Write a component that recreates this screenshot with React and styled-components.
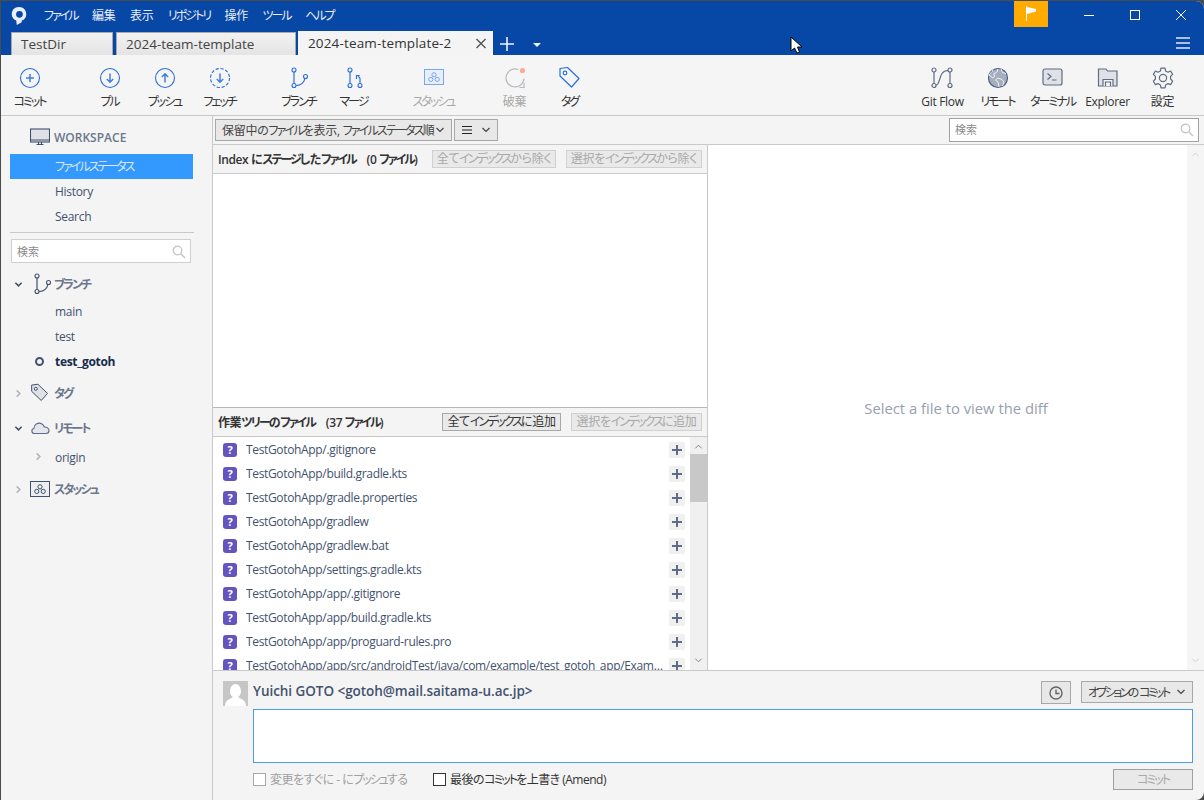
import React from 'react';
import styled, { createGlobalStyle } from 'styled-components';

const Global = createGlobalStyle`
  html, body { margin: 0; padding: 0; height: 100%; background: #4b4b4b; overflow: hidden; }
  body { font-family: "Open Sans", "Noto Sans CJK JP", sans-serif; font-size: 12px; font-feature-settings: "palt"; color: #42526e; letter-spacing: -0.3px; }
  #root { width: 1204px; height: 800px; }
  * { box-sizing: border-box; }
`;

const Kana = styled.span`letter-spacing: var(--kana, -2px);`;
const jp = (s) => s.split(/([ァ-ヶー]+)/).map((part, i) => (i % 2 ? <Kana key={i}>{part}</Kana> : part));

const Win = styled.div`
  position: relative; width: 1203px; height: 799px; margin: 1px 0 0 1px; background: #f4f4f4;
  border-radius: 0 8px 8px 0; overflow: hidden; display: flex; flex-direction: column;
`;
const Blue = styled.header`background: #0747a6; height: 54px; flex: none; display: flex; flex-direction: column;`;
const TitleRow = styled.div`height: 30px; display: flex; align-items: flex-start;`;
const Logo = styled.div`width: 43px; height: 30px; padding: 5px 0 0 9px; flex: none;`;
const Menu = styled.nav`display: flex; gap: 14.5px; padding-top: 7px; color: #e8eef8; line-height: 16px;`;
const Spacer = styled.div`flex: 1;`;
const Flag = styled.div`width: 34px; height: 26px; background: #ffab00; display: flex; justify-content: center; padding-top: 5px; margin-right: 18px;`;
const WinBtn = styled.div`width: 46px; height: 30px; display: flex; align-items: center; justify-content: center; padding-bottom: 2px;`;
const TabRow = styled.div`height: 24px; display: flex; align-items: flex-end; padding-left: 10px; color: #333;`;
const Tab = styled.div`
  width: ${p => p.$w}px; height: 23px; margin-right: ${p => p.$mr}px; padding-left: ${p => p.$pl}px; line-height: 22px; font-size: 13.5px; letter-spacing: 0;
  background: linear-gradient(#f2f2f2, #e4e4e4); border: 1px solid #a9a9a9; border-bottom: 0; color: #444;
`;
const ActiveTab = styled.div`
  width: 195px; height: 24px; background: #f4f4f4; padding-left: 10px; line-height: 24px; font-size: 13.5px; letter-spacing: 0.15px; color: #333;
  display: flex; justify-content: space-between; align-items: center;
`;
const TabActions = styled.div`display: flex; align-items: center; flex: 1; height: 24px;`;

const Toolbar = styled.div`height: 61px; flex: none; display: flex; padding-left: 1px; border-bottom: 1px solid #c9c9c9; background: #f5f5f5;`;
const TBtn = styled.div`
  width: 55px; margin-left: ${p => p.$ml || 0}px; margin-right: ${p => p.$mr || 0}px; display: flex; flex-direction: column; align-items: center; padding-top: 11px; flex: none;
  color: ${p => p.$off ? '#a8a8a8' : '#333'}; font-size: 12px; line-height: 16px; white-space: nowrap;
`;
const TIcon = styled.div`height: 24px; margin-bottom: 4px; padding-top: ${p => p.$pt || 0}px;`;
const TLabel = styled.span`display: block;`;

const Main = styled.div`flex: 1; display: flex; min-height: 0;`;
const Side = styled.aside`width: 212px; flex: none; border-right: 1px solid #c9c9c9; padding-top: 8px; display: flex; flex-direction: column;`;
const Head = styled.div`display: flex; align-items: center; height: ${p => p.$h || 28}px; margin-top: ${p => p.$mt || 0}px; margin-bottom: ${p => p.$mb || 0}px; color: #6b778c; font-weight: 600; font-size: 12px; letter-spacing: 0;`;
const Caret = styled.div`width: 29px; padding-left: 13px; flex: none; display: flex;`;
const HeadIcon = styled.div`width: 24px; flex: none; display: flex;`;
const SideItem = styled.div`
  height: 25px; line-height: 25px; padding-left: 45px; margin: ${p => p.$mt || 0}px 19px 0 9px; color: ${p => p.$sel ? '#dde7f5' : p.$cur ? '#172b4d' : '#42526e'}; background: ${p => p.$sel ? '#3399ff' : 'none'};
  font-weight: ${p => p.$cur ? 700 : 400}; position: relative;
`;
const Dot = styled.span`position: absolute; left: 25px; top: 8px; width: 9px; height: 9px; border: 2px solid #42526e; border-radius: 50%;`;
const Tri = styled.span`position: absolute; left: 24px; top: 7px; display: flex;`;
const Divider = styled.div`height: 1px; background: #c9c9c9; margin: 3px 18px 6px 9px;`;
const SearchBox = styled.div`
  width: ${p => p.$w}px; height: 24px; background: #fff; border: 1px solid ${p => p.$dark ? '#a2a2a2' : '#cfcfcf'}; color: #8a8a8a; font-size: 11px; line-height: 22px; padding: 1px 4px 0 5px;
  display: flex; justify-content: space-between; align-items: center; margin-left: ${p => p.$ml || 0}px; flex: none; letter-spacing: 0;
`;

const Work = styled.div`flex: 1; display: flex; flex-direction: column; min-width: 0;`;
const FilterBar = styled.div`height: 29px; flex: none; display: flex; align-items: center; padding: 0 5px 1px 2px; border-bottom: 1px solid #c9c9c9; gap: 2px;`;
const Select = styled.div`
  height: 22px; width: ${p => p.$w}px; background: #e8e8e8; border: 1px solid #a8a8a8; padding: 0 6px 0 6px; display: flex; align-items: center; justify-content: space-between;
  color: #444; font-size: 12px; font-weight: 400; letter-spacing: -0.3px; flex: none; white-space: nowrap; margin-left: ${p => p.$ml || 0}px; --kana: ${p => p.$kana || -2}px;
`;
const Panes = styled.div`flex: 1; display: flex; min-height: 0;`;
const Left = styled.div`width: 495px; flex: none; display: flex; flex-direction: column; border-right: 1px solid #c9c9c9;`;
const PaneHead = styled.div`
  height: ${p => p.$h}px; flex: none; display: flex; align-items: center; padding: 0 5px 0 5px; gap: 10px; border-bottom: 1px solid #c9c9c9; border-top: ${p => p.$top ? '1px solid #b8b8b8' : 'none'};
  color: #333; font-weight: 600; font-size: 12px; white-space: pre; letter-spacing: -0.4px;
`;
const PaneTitle = styled.div`flex: 1; min-width: 0;`;
const Btn = styled.div`
  height: 18px; width: ${p => p.$w}px; text-align: center; line-height: 16px; flex: none; font-size: 12px; font-weight: 400; letter-spacing: -0.3px;
  border: 1px solid ${p => p.$off ? '#d0d0d0' : '#a8a8a8'}; background: #e9e9e9; color: ${p => p.$off ? '#a8a8a8' : '#333'};
`;
const Blank = styled.div`height: 233px; flex: none; background: #fff;`;
const ListWrap = styled.div`flex: 1; display: flex; background: #fff; min-height: 0; overflow: hidden;`;
const List = styled.div`flex: 1; min-width: 0; padding-top: 1px;`;
const Row = styled.div`height: 24px; display: flex; align-items: center; padding: 0 5px 0 10px; color: #42526e; flex: none;`;
const Q = styled.span`width: 14px; height: 14px; border-radius: 3px; background: #6554c0; color: #fff; font-size: 11px; font-weight: 700; line-height: 14px; text-align: center; flex: none; margin-right: 9px;`;
const Name = styled.span`flex: 1; overflow: hidden; white-space: nowrap; text-overflow: ellipsis; min-width: 0; margin-bottom: 1px; letter-spacing: -0.34px;`;
const Plus = styled.span`width: 16px; height: 16px; border-radius: 2px; background: #f0f0f0; flex: none; margin-left: 6px; display: flex; align-items: center; justify-content: center;`;
const Scroll = styled.div`width: 17px; flex: none; background: ${p => p.$light ? '#f5f5f5' : '#f0f0f0'}; display: flex; flex-direction: column; align-items: center; justify-content: space-between; padding: 5px 0;position: relative;`;
const Thumb = styled.div`position: absolute; left: 0; top: 17px; width: 17px; height: 48px; background: #c8c8c8;`;
const Diff = styled.div`flex: 1; display: flex; background: #fff; min-width: 0;`;
const DiffMsg = styled.div`flex: 1; display: flex; align-items: center; justify-content: center; color: #97a0af; font-size: 14.8px; letter-spacing: 0; padding: 1px 0 0 17px;`;

const CommitArea = styled.div`height: 130px; flex: none; border-top: 1px solid #c9c9c9; padding: 10px 11px 0 10px; display: flex; gap: 5px;`;
const Avatar = styled.div`width: 25px; height: 25px; background: #c6c6c6; flex: none; overflow: hidden;`;
const CommitMain = styled.div`flex: 1; min-width: 0; display: flex; flex-direction: column;`;
const CommitTop = styled.div`height: 28px; display: flex; align-items: flex-start; color: #42526e; font-size: 13.5px; font-weight: 600;`;
const Who = styled.div`flex: 1; line-height: 20px; letter-spacing: -0.05px;`;
const ClockBtn = styled.div`width: 30px; height: 23px; border: 1px solid #a8a8a8; background: #e8e8e8; display: flex; align-items: center; justify-content: center;`;
const CommitBox = styled.div`height: 54px; background: #fff; border: 1px solid #4c9aeb; flex: none;`;
const CommitFoot = styled.div`display: flex; align-items: center; height: 32px; font-size: 12px;`;
const Check = styled.span`width: 13px; height: 13px; background: #fff; border: 1px solid ${p => p.$off ? '#a8a8a8' : '#333'}; flex: none; margin-right: 4px;`;
const Label = styled.span`color: ${p => p.$off ? '#a0a0a0' : '#333'}; width: ${p => p.$w}px; flex: none; letter-spacing: -0.5px;`;
const CommitBtn = styled.div`width: 80px; height: 21px; border: 1px solid #a0a0a0; background: #e9e9e9; color: #a8a8a8; text-align: center; line-height: 19px; margin-left: auto; font-size: 12px;`;
const Pointer = styled.svg`position: absolute; left: 789px; top: 35px;`;

const B = '#2b6fdc';
const G = '#42526e';
const Circ = ({ children, dash }) => (
  <svg width="24" height="24" viewBox="0 0 24 24" fill="none" stroke={B}>
    <circle cx="12" cy="12" r="9.5" strokeWidth="1.1" strokeDasharray={dash ? '3.2 1.8' : undefined} />
    {children}
  </svg>
);
const Ar = ({ up }) => (
  <path d={up ? 'M12 16.5V8M8.8 11L12 7.8 15.2 11' : 'M12 7.5V16M8.8 13L12 16.2 15.2 13'} strokeWidth="1.5" stroke="#3b7fe0" />
);
const BranchIcon = ({ c = B }) => (
  <svg width="24" height="24" viewBox="0 0 24 24" fill="none" stroke={c} strokeWidth="1.1">
    <circle cx="7" cy="4" r="2" /><circle cx="7" cy="19.5" r="2" /><circle cx="18.5" cy="10.5" r="2" />
    <path d="M7 6V17.5M9 19.5C13 19.5 17 17 18 12.4" strokeWidth="1.2" />
  </svg>
);
const MergeIcon = () => (
  <svg width="24" height="24" viewBox="0 0 24 24" fill="none" stroke={B} strokeWidth="1.1">
    <g transform="translate(2.5 0)">
      <circle cx="5.5" cy="4" r="2" /><circle cx="5.5" cy="19.5" r="2" /><circle cx="15.5" cy="19.5" r="2" />
      <path d="M5.5 6V17.5M15.5 17.5V12.5C15.5 11.5 14.8 11 13.5 10.5M12 13V9.5H15.2" strokeWidth="1.2" />
    </g>
  </svg>
);
const StashIcon = ({ c = '#7aa6ea', bg = '#e8eefb', w = 20, h = 16 }) => (
  <svg width={w} height={h} viewBox="0 0 20 16" fill={bg} stroke={c} strokeWidth="1">
    <rect x=".5" y=".5" width="19" height="15" />
    <circle cx="10" cy="5.8" r="2.1" fill="none" /><circle cx="6.8" cy="10.4" r="2.1" fill="none" /><circle cx="13.2" cy="10.4" r="2.1" fill="none" />
  </svg>
);
const Discard = () => (
  <svg width="24" height="24" viewBox="0 0 24 24" fill="none" stroke="#b5bac2" strokeWidth="1.2">
    <path d="M15 3.4A9 9 0 1 0 21 12.5" /><path d="M16.5 21.5H21V16.8" />
    <circle cx="19.5" cy="4.5" r="2.6" fill="#ffa89a" stroke="none" />
  </svg>
);
const TagIcon = ({ c = B, fill = 'none', s = 24 }) => (
  <svg width={s} height={s} viewBox="0 0 24 24" fill={fill} stroke={c} strokeWidth="1.2" strokeLinejoin="round">
    <path d="M2 2.5L9.5 1.5 21 12.5 13.5 21 2 10Z" /><circle cx="7" cy="7" r="1.8" fill={c === B ? 'none' : '#f4f4f4'} />
  </svg>
);
const Flow = () => (
  <svg width="24" height="24" viewBox="0 0 24 24" fill="none" stroke="#5e6c84" strokeWidth="1.2">
    <circle cx="3" cy="4" r="2" /><circle cx="3" cy="19.5" r="2" /><circle cx="19" cy="4" r="2" /><circle cx="19" cy="19.5" r="2" /><path d="M3 6V17.5M19 6V17.5M5 19C10 19 7 4.5 17 4.500" />
  </svg>
);
const Globe = () => (
  <svg width="24" height="24" viewBox="0 0 24 24" fill="#a5aebf" stroke="#4f5f7d" strokeWidth="1.2">
    <circle cx="12" cy="12" r="9.5" />
    <path d="M7 3.500C7 6 4 7 3 9L7 12 9 10 7.500 8 11 6 12 3M13 21L12 16 9.500 14 12 12 16 13.500 18 16 16.500 20M15 3L16.500 6.500 20 7.500" fill="none" stroke="#eef0f4" strokeWidth="1" />
  </svg>
);
const Term = () => (
  <svg width="24" height="24" viewBox="0 0 24 24" fill="#dfe1e6" stroke="#5e6c84" strokeWidth="1.2">
    <rect x="2" y="3" width="19" height="16" rx="2" /><path d="M6.500 7.500L10 10.500 6.500 13.500M11 14H15.500" fill="none" />
  </svg>
);
const Folder = () => (
  <svg width="24" height="24" viewBox="0 0 24 24" fill="#dfe1e6" stroke="#5e6c84" strokeWidth="1.2">
    <path d="M2.500 20V3H10L11.500 5H21V20Z" /><path d="M7 20V13.500H17V20M9.500 20V16H14.500V20" fill="#f4f4f4" />
  </svg>
);
const Gear = () => (
  <svg width="24" height="24" viewBox="0 0 24 24" fill="none" stroke="#5e6c84" strokeWidth="1.2" strokeLinejoin="round">
    <path d="M10 2.200H14L14.600 5 17 6.200 19.600 5 21.600 8.400 19.600 10.400V13L21.600 15.200 19.600 18.600 17 17.600 14.600 19 14 21.800H10L9.400 19 7 17.600 4.400 18.600 2.400 15.200 4.400 13V10.400L2.400 8.400 4.400 5 7 6.200 9.400 5Z" />
    <circle cx="12" cy="12" r="3.6" />
  </svg>
);
const Monitor = () => (
  <svg width="20" height="20" viewBox="0 0 20 20" fill="#dfe1e6" stroke="#42526e" strokeWidth="1.1">
    <rect x=".5" y="1" width="19" height="13" /><path d="M.5 12H19.500M6.500 16.500H13.500M8.500 14V16.500M11.500 14V16.500" fill="none" />
  </svg>
);
const Cloud = () => (
  <svg width="20" height="14" viewBox="0 0 20 14" fill="#e3e6ec" stroke="#5e6c84" strokeWidth="1.1">
    <path d="M4.500 12.500C1.500 12.500.8 8.500 3.800 7.500 4 3.500 8.500.6 12 3 13.500 3.800 14 5 14.300 6 17.500 5.800 19 8 19 9.500 19 11.500 17.500 12.500 16 12.500Z" />
  </svg>
);
const Search = () => (
  <svg width="14" height="14" viewBox="0 0 14 14" fill="none" stroke="#c4c4c4" strokeWidth="1.2">
    <circle cx="5.500" cy="5.500" r="4.300" /><path d="M8.800 8.800L13 13" strokeWidth="1.5" />
  </svg>
);
const Chev = ({ dir = 'down', c = '#42526e', s = 9, w = 1.8 }) => (
  <svg width={s} height={s} viewBox="0 0 10 10" fill="none" stroke={c} strokeWidth={w}>
    <path d={dir === 'down' ? 'M1.500 3L5 6.500 8.500 3' : dir === 'up' ? 'M1.500 7L5 3.500 8.500 7' : 'M3 1.500L6.500 5 3 8.500'} />
  </svg>
);
const PlusG = () => (
  <svg width="12" height="12" viewBox="0 0 12 12" stroke="#5e6c84" strokeWidth="2"><path d="M6 1V11M1 6H11" /></svg>
);

const files = [
  'TestGotohApp/.gitignore', 'TestGotohApp/build.gradle.kts', 'TestGotohApp/gradle.properties', 'TestGotohApp/gradlew',
  'TestGotohApp/gradlew.bat', 'TestGotohApp/settings.gradle.kts', 'TestGotohApp/app/.gitignore', 'TestGotohApp/app/build.gradle.kts',
  'TestGotohApp/app/proguard-rules.pro', 'TestGotohApp/app/src/androidTest/java/com/example/test_gotoh_app/ExampleInstrumentedTest.kt',
];
const menus = ['ファイル', '編集', '表示', 'リポジトリ', '操作', 'ツール', 'ヘルプ'];

export default function App() {
  return (
    <Win>
      <Global />
      <Blue>
        <TitleRow>
          <Logo>
            <svg width="18" height="20" viewBox="0 0 18 22">
              <path fillRule="evenodd" fill="#e9f0fb" d="M9 1C4 1 1 4.500 1 9C1 12.500 3.500 15 6 16L6.500 21L12 18L12 16C15 15 17 12.500 17 9C17 4.500 14 1 9 1ZM9.500 5.500A3.700 3.700 0 1 1 9.500 12.900A3.700 3.700 0 1 1 9.500 5.500Z" />
            </svg>
          </Logo>
          <Menu>
            {menus.map(m => <span key={m}>{jp(m)}</span>)}
          </Menu>
          <Spacer />
          <Flag>
            <svg width="12" height="15" viewBox="0 0 12 15"><path d="M1.500 0V15" stroke="#fff" strokeWidth="1" /><path d="M2 1L11 3V5.500L2 8Z" fill="#fff" /></svg>
          </Flag>
          <WinBtn><svg width="12" height="12" stroke="#fff"><path d="M1 6.500H11" /></svg></WinBtn>
          <WinBtn><svg width="12" height="12" fill="none" stroke="#fff"><rect x="1.500" y="1.500" width="9" height="9" /></svg></WinBtn>
          <WinBtn><svg width="12" height="12" stroke="#fff"><path d="M1 1L11 11M11 1L1 11" /></svg></WinBtn>
        </TitleRow>
        <TabRow>
          <Tab $w={102} $mr={3} $pl={9}>TestDir</Tab>
          <Tab $w={180} $mr={2} $pl={9}>2024-team-template</Tab>
          <ActiveTab>
            2024-team-template-2
            <svg width="24" height="24" viewBox="0 0 24 24" stroke="#555" strokeWidth="1.400"><path d="M7.500 8L16.500 17M16.500 8L7.500 17" /></svg>
          </ActiveTab>
          <TabActions>
            <svg width="27" height="24" viewBox="0 0 27 24" stroke="#f0f4fa" strokeWidth="1.600"><path d="M14 6V20M7 13H21" /></svg>
            <svg width="28" height="24" viewBox="0 0 28 24" fill="#f0f4fa"><path d="M13 12H21L17 16Z" /></svg>
            <Spacer />
            <svg width="50" height="24" viewBox="0 0 50 24" stroke="#a9c0e3" strokeWidth="2"><path d="M22 7H36M22 12H36M22 17H36" /></svg>
          </TabActions>
        </TabRow>
      </Blue>
      <Toolbar>
        <TBtn><TIcon><Circ><path d="M12 8V16M8 12H16" strokeWidth="1.500" stroke="#3b7fe0" /></Circ></TIcon><TLabel>{jp('コミット')}</TLabel></TBtn>
        <TBtn $ml={25}><TIcon><Circ><Ar /></Circ></TIcon><TLabel>{jp('プル')}</TLabel></TBtn>
        <TBtn><TIcon><Circ><Ar up /></Circ></TIcon><TLabel>{jp('プッシュ')}</TLabel></TBtn>
        <TBtn><TIcon><Circ dash><Ar /></Circ></TIcon><TLabel>{jp('フェッチ')}</TLabel></TBtn>
        <TBtn $ml={24}><TIcon><BranchIcon /></TIcon><TLabel>{jp('ブランチ')}</TLabel></TBtn>
        <TBtn><TIcon><MergeIcon /></TIcon><TLabel>{jp('マージ')}</TLabel></TBtn>
        <TBtn $ml={25} $off><TIcon $pt={3}><StashIcon /></TIcon><TLabel>{jp('スタッシュ')}</TLabel></TBtn>
        <TBtn $ml={26} $off><TIcon><Discard /></TIcon><TLabel>破棄</TLabel></TBtn>
        <TBtn><TIcon><TagIcon /></TIcon><TLabel>{jp('タグ')}</TLabel></TBtn>
        <Spacer />
        <TBtn><TIcon><Flow /></TIcon><TLabel>Git Flow</TLabel></TBtn>
        <TBtn><TIcon><Globe /></TIcon><TLabel>{jp('リモート')}</TLabel></TBtn>
        <TBtn><TIcon><Term /></TIcon><TLabel>{jp('ターミナル')}</TLabel></TBtn>
        <TBtn><TIcon><Folder /></TIcon><TLabel>Explorer</TLabel></TBtn>
        <TBtn $mr={14}><TIcon><Gear /></TIcon><TLabel>設定</TLabel></TBtn>
      </Toolbar>
      <Main>
        <Side>
          <Head $h={27} $mb={3}><Caret /><HeadIcon><Monitor /></HeadIcon>WORKSPACE</Head>
          <SideItem $sel>{jp('ファイルステータス')}</SideItem>
          <SideItem>History</SideItem>
          <SideItem>Search</SideItem>
          <Divider />
          <SearchBox $w={180} $ml={10}>検索<Search /></SearchBox>
          <Head $mt={7}><Caret><Chev /></Caret><HeadIcon><BranchIcon c={G} /></HeadIcon><span>{jp('ブランチ')}</span></Head>
          <SideItem $mt={1}>main</SideItem>
          <SideItem>test</SideItem>
          <SideItem $cur><Dot />test_gotoh</SideItem>
          <Head $mt={5}><Caret><Chev dir="right" c="#b5b5b5" /></Caret><HeadIcon><TagIcon c={G} fill="#dfe1e6" s={20} /></HeadIcon><span>{jp('タグ')}</span></Head>
          <Head $mt={7}><Caret><Chev /></Caret><HeadIcon><Cloud /></HeadIcon><span>{jp('リモート')}</span></Head>
          <SideItem $mt={3}><Tri><Chev dir="right" c="#b5b5b5" /></Tri>origin</SideItem>
          <Head $mt={5}><Caret><Chev dir="right" c="#b5b5b5" /></Caret><HeadIcon><StashIcon c={G} bg="#eceef2" /></HeadIcon><span>{jp('スタッシュ')}</span></Head>
        </Side>
        <Work>
          <FilterBar>
            <Select $w={237} $kana={-1.8}><span>{jp('保留中のファイルを表示, ファイルステータス順')}</span><Chev c="#444" s={10} w={1.200} /></Select>
            <Select $w={44}>
              <svg width="12" height="10" stroke="#222"><path d="M1 1.500H11M1 5H11M1 8.500H11" /></svg>
              <Chev c="#444" s={10} w={1.200} />
            </Select>
            <Spacer />
            <SearchBox $w={250} $dark>検索<Search /></SearchBox>
          </FilterBar>
          <Panes>
            <Left>
              <PaneHead $h={29}>
                <PaneTitle>{jp('Index にステージしたファイル    (0 ファイル)')}</PaneTitle>
                <Btn $off $w={124}>{jp('全てインデックスから除く')}</Btn>
                <Btn $off $w={136}>{jp('選択をインデックスから除く')}</Btn>
              </PaneHead>
              <Blank />
              <PaneHead $h={30} $top>
                <PaneTitle>{jp('作業ツリーのファイル    (37 ファイル)')}</PaneTitle>
                <Btn $w={119}>{jp('全てインデックスに追加')}</Btn>
                <Btn $off $w={131}>{jp('選択をインデックスに追加')}</Btn>
              </PaneHead>
              <ListWrap>
                <List>
                  {files.map(f => (
                    <Row key={f}><Q>?</Q><Name>{f}</Name><Plus><PlusG /></Plus></Row>
                  ))}
                </List>
                <Scroll><Chev dir="up" c="#777" s={9} w={1} /><Thumb /><Chev c="#777" s={9} w={1} /></Scroll>
              </ListWrap>
            </Left>
            <Diff>
              <DiffMsg>Select a file to view the diff</DiffMsg>
              <Scroll $light><Chev dir="up" c="#ccc" s={9} w={1} /><Chev c="#ccc" s={9} w={1} /></Scroll>
            </Diff>
          </Panes>
          <CommitArea>
            <Avatar>
              <svg width="25" height="25" viewBox="0 0 25 25" fill="#fff"><ellipse cx="12.500" cy="10" rx="5.500" ry="7" /><path d="M2 25C2 19 7 18 10 16H15C18 18 23 19 23 25Z" /></svg>
            </Avatar>
            <CommitMain>
              <CommitTop>
                <Who>Yuichi GOTO &lt;gotoh@mail.saitama-u.ac.jp&gt;</Who>
                <ClockBtn>
                  <svg width="14" height="14" viewBox="0 0 14 14" fill="none" stroke="#666" strokeWidth="1.400"><circle cx="7" cy="7" r="6" /><path d="M7 3.500V7.500H10.500" /></svg>
                </ClockBtn>
                <Select $w={112} $ml={10} $kana={-2.6}><span>{jp('オプションのコミット')}</span><Chev c="#444" s={10} w={1.200} /></Select>
              </CommitTop>
              <CommitBox />
              <CommitFoot>
                <Check $off /><Label $off $w={163}>{jp('変更をすぐに - にプッシュする')}</Label>
                <Check /><Label>{jp('最後のコミットを上書き (Amend)')}</Label>
                <CommitBtn>{jp('コミット')}</CommitBtn>
              </CommitFoot>
            </CommitMain>
          </CommitArea>
        </Work>
      </Main>
      <Pointer width="14" height="18" viewBox="0 0 14 18"><path d="M1 1V15L4.500 12 7 17 9.500 16 7.500 11H12Z" fill="#fff" stroke="#000" strokeWidth="1" /></Pointer>
    </Win>
  );
}
